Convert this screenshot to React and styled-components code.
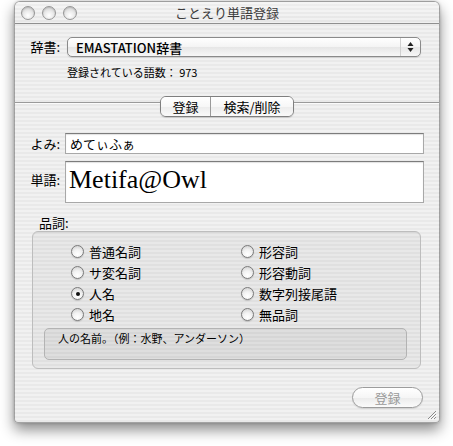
import React, { useState } from "react";
import styled, { createGlobalStyle, css } from "styled-components";

const GlobalStyle = createGlobalStyle`
  html, body {
    margin: 0;
    padding: 0;
    background: #fff;
  }
  body {
    font-family: "Noto Sans CJK JP", "DejaVu Sans", sans-serif;
    color: #000;
  }
`;

const pinstripe = css`
  background: repeating-linear-gradient(
    to bottom,
    #f1f1f1 0,
    #f1f1f1 2px,
    #e9e9e9 2px,
    #e9e9e9 4px
  );
`;

const Page = styled.div`
  padding: 1px 0 0 14px;
  height: 445px;
  box-sizing: border-box;
`;

const Window = styled.div`
  position: relative;
  width: 426px;
  box-sizing: border-box;
  border: 1px solid rgba(0, 0, 0, 0.32);
  border-radius: 6px 6px 4px 4px;
  box-shadow: 0 7px 14px rgba(0, 0, 0, 0.45), 0 0 3px rgba(0, 0, 0, 0.2);
  overflow: hidden;
  ${pinstripe}
`;

const TitleBar = styled.div`
  position: relative;
  height: 21px;
  display: flex;
  align-items: center;
  padding-left: 6px;
  gap: 7px;
  border-bottom: 1px solid #8f8f8f;
  background: linear-gradient(rgba(255, 255, 255, 0.35), rgba(255, 255, 255, 0)),
    repeating-linear-gradient(#f0f0f0 0 2px, #e6e6e6 2px 4px);
`;

const Light = styled.span`
  width: 12px;
  height: 12px;
  border-radius: 50%;
  border: 1px solid #959595;
  background: radial-gradient(
    circle at 50% 70%,
    #ffffff 0%,
    #ececec 40%,
    #c4c4c4 100%
  );
  box-shadow: inset 0 1px 1px rgba(0, 0, 0, 0.12);
`;

const Title = styled.div`
  position: absolute;
  left: 0;
  right: 0;
  text-align: center;
  font-size: 13px;
  color: #3c3c3c;
  pointer-events: none;
  line-height: 21px;
`;

const Body = styled.div`
  display: flex;
  flex-direction: column;
  padding: 13px 0 14px;
`;

const DictRow = styled.div`
  display: flex;
  align-items: center;
  padding: 0 18px 0 0;
`;

const Label = styled.label`
  width: ${(p) => p.$w || 45}px;
  text-align: right;
  font-size: 13px;
  line-height: 16px;
  flex-shrink: 0;
  align-self: ${(p) => (p.$top ? "flex-start" : "center")};
  margin-top: ${(p) => (p.$top ? "11px" : "0")};
`;

const Popup = styled.div`
  flex: 1;
  margin-left: 7px;
  height: 20px;
  box-sizing: border-box;
  border: 1px solid #8a8a8a;
  border-radius: 5px;
  background: linear-gradient(#ffffff 0%, #f4f4f4 50%, #e6e6e6 51%, #f7f7f7 100%);
  box-shadow: 0 1px 1px rgba(0, 0, 0, 0.12);
  display: flex;
  align-items: center;
  font-size: 13px;
  font-weight: 500;
  font-family: "Noto Sans CJK JP", sans-serif;
`;

const PopupText = styled.span`
  flex: 1;
  padding-left: 8px;
`;

const PopupArrows = styled.span`
  width: 19px;
  height: 100%;
  border-left: 1px solid #d0d0d0;
  display: flex;
  align-items: center;
  justify-content: center;
`;

const CountText = styled.div`
  margin: 8px 0 0 52px;
  font-size: 11px;
  line-height: 14px;
`;

const TabBar = styled.div`
  display: flex;
  margin-top: 17px;
  &::before,
  &::after {
    content: "";
    flex: 1;
    height: 1px;
    margin-top: 6px;
    background: #9a9a9a;
    box-shadow: 0 1px 0 rgba(255, 255, 255, 0.7);
  }
`;

const Segmented = styled.div`
  display: flex;
  height: 21px;
  box-sizing: border-box;
  border: 1px solid #7f7f7f;
  border-radius: 6px;
  overflow: hidden;
  box-shadow: 0 1px 1px rgba(0, 0, 0, 0.15);
`;

const Segment = styled.button`
  all: unset;
  box-sizing: border-box;
  width: ${(p) => p.$w}px;
  text-align: center;
  font-size: 13px;
  line-height: 19px;
  font-family: "Noto Sans CJK JP", sans-serif;
  background: ${(p) =>
    p.$active
      ? "linear-gradient(#f8f8f8 0%, #ececec 50%, #dedede 51%, #f2f2f2 100%)"
      : "linear-gradient(#ffffff 0%, #f7f7f7 50%, #ececec 51%, #fafafa 100%)"};
  & + & {
    border-left: 1px solid #9a9a9a;
  }
`;

const FieldRow = styled.div`
  display: flex;
  margin-top: ${(p) => p.$mt}px;
  padding-right: 15px;
`;

const TextField = styled.div`
  flex: 1;
  margin-left: 5px;
  height: ${(p) => p.$h}px;
  box-sizing: border-box;
  background: #fff;
  border: 1px solid #a8a8a8;
  border-top-color: #7c7c7c;
  box-shadow: inset 0 1px 1px rgba(0, 0, 0, 0.12);
  padding: ${(p) => (p.$big ? "3px 0 0 3px" : "0 0 0 4px")};
  font-size: ${(p) => (p.$big ? "26px" : "13px")};
  line-height: ${(p) => (p.$big ? "30px" : "19px")};
  font-family: ${(p) =>
    p.$big
      ? '"Liberation Serif", "Noto Sans CJK JP", serif'
      : '"Noto Sans CJK JP", sans-serif'};
`;

const SectionLabel = styled.div`
  margin: 12px 0 0 24px;
  font-size: 13px;
  line-height: 16px;
`;

const GroupBox = styled.div`
  margin: 0 18px 0 17px;
  border: 1px solid #bdbdbd;
  border-radius: 6px;
  background: rgba(0, 0, 0, 0.035);
  box-shadow: inset 0 1px 0 rgba(0, 0, 0, 0.04);
  padding: 9px 13px 8px 11px;
`;

const RadioGrid = styled.div`
  display: grid;
  grid-template-columns: 170px 1fr;
  grid-auto-rows: 21px;
  padding-left: 27px;
`;

const RadioItem = styled.label`
  display: flex;
  align-items: center;
  gap: 5px;
  font-size: 13px;
  cursor: default;
`;

const RadioDot = styled.span`
  width: 13px;
  height: 13px;
  box-sizing: border-box;
  border-radius: 50%;
  border: 1px solid #7a7a7a;
  background: radial-gradient(
    circle at 50% 75%,
    #ffffff 0%,
    #f2f2f2 45%,
    #c9c9c9 100%
  );
  box-shadow: 0 1px 1px rgba(0, 0, 0, 0.15);
  display: flex;
  align-items: center;
  justify-content: center;
  &::after {
    content: "";
    width: 4px;
    height: 4px;
    border-radius: 50%;
    background: ${(p) => (p.$on ? "#111" : "transparent")};
  }
`;

const DescBox = styled.div`
  margin-top: 3px;
  height: 32px;
  box-sizing: border-box;
  border: 1px solid #b3b3b3;
  border-radius: 5px;
  background: rgba(0, 0, 0, 0.045);
  padding: 1px 0 0 13px;
  font-size: 11px;
  line-height: 16px;
`;

const Footer = styled.div`
  display: flex;
  justify-content: flex-end;
  margin-top: 18px;
  padding-right: 16px;
`;

const PushButton = styled.button`
  all: unset;
  width: 71px;
  height: 21px;
  box-sizing: border-box;
  border: 1px solid #9c9c9c;
  border-radius: 11px;
  text-align: center;
  font-size: 13px;
  line-height: 19px;
  font-family: "Noto Sans CJK JP", sans-serif;
  color: ${(p) => (p.disabled ? "#9a9a9a" : "#000")};
  background: linear-gradient(#ffffff 0%, #f6f6f6 50%, #ebebeb 51%, #fbfbfb 100%);
  box-shadow: 0 1px 1px rgba(0, 0, 0, 0.1);
`;

const Grip = styled.svg`
  position: absolute;
  right: 2px;
  bottom: 2px;
`;

const parts = [
  ["普通名詞", "形容詞"],
  ["サ変名詞", "形容動詞"],
  ["人名", "数字列接尾語"],
  ["地名", "無品詞"],
];

const App = () => {
  const [pos, setPos] = useState("人名");
  const [tab, setTab] = useState(0);

  return (
    <>
      <GlobalStyle />
      <Page>
        <Window>
          <TitleBar>
            <Light />
            <Light />
            <Light />
            <Title>ことえり単語登録</Title>
          </TitleBar>
          <Body>
            <DictRow>
              <Label>辞書:</Label>
              <Popup>
                <PopupText>EMASTATION辞書</PopupText>
                <PopupArrows>
                  <svg width="7" height="12" viewBox="0 0 7 12">
                    <path d="M3.5 1 L6.5 5 L0.5 5 Z" fill="#222" />
                    <path d="M3.5 11 L6.5 7 L0.5 7 Z" fill="#222" />
                  </svg>
                </PopupArrows>
              </Popup>
            </DictRow>
            <CountText>登録されている語数： 973</CountText>

            <TabBar>
              <Segmented>
                <Segment $w={49} $active={false} onClick={() => setTab(0)}>
                  登録
                </Segment>
                <Segment $w={83} $active={false} onClick={() => setTab(1)}>
                  検索/削除
                </Segment>
              </Segmented>
            </TabBar>

            <FieldRow $mt={16}>
              <Label>よみ:</Label>
              <TextField $h={21}>めてぃふぁ</TextField>
            </FieldRow>
            <FieldRow $mt={7}>
              <Label $top>単語:</Label>
              <TextField $h={42} $big>
                Metifa@Owl
              </TextField>
            </FieldRow>

            <SectionLabel>品詞:</SectionLabel>
            <GroupBox>
              <RadioGrid>
                {parts.flat().map((name) => (
                  <RadioItem key={name} onClick={() => setPos(name)}>
                    <RadioDot $on={pos === name} />
                    {name}
                  </RadioItem>
                ))}
              </RadioGrid>
              <DescBox>人の名前。（例：水野、アンダーソン）</DescBox>
            </GroupBox>

            <Footer>
              <PushButton disabled>登録</PushButton>
            </Footer>
          </Body>
          <Grip width="11" height="11" viewBox="0 0 11 11">
            <path
              d="M10 2 L2 10 M10 5 L5 10 M10 8 L8 10"
              stroke="#8a8a8a"
              strokeWidth="1"
            />
            <path
              d="M10.8 2.8 L2.8 10.8 M10.8 5.8 L5.8 10.8"
              stroke="#ffffff"
              strokeWidth="1"
            />
          </Grip>
        </Window>
      </Page>
    </>
  );
};

export default App;
